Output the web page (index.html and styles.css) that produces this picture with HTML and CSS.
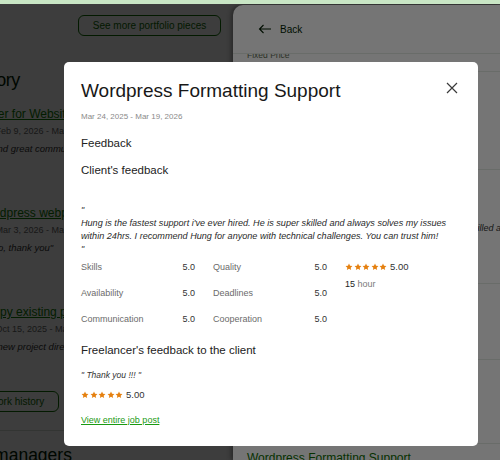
FILE: index.html
```html
<!DOCTYPE html>
<html lang="en">
<head>
    <meta charset="UTF-8">
    <meta name="viewport" content="width=device-width, initial-scale=1.0">
    <title>Work history - Wordpress Formatting Support</title>
    <link rel="stylesheet" href="styles.css">
</head>
<body>
    <svg class="defs" width="0" height="0" aria-hidden="true">
        <symbol id="star" viewBox="0 0 24 24">
            <path d="M12 1.5l3.1 6.6 7.2.9-5.3 5 1.4 7.1L12 17.6l-6.4 3.5 1.4-7.1-5.3-5 7.2-.9z"/>
        </symbol>
    </svg>

    <div class="promo-strip"></div>

    <div class="app">
        <main class="page">
            <div class="page-inner">
                <div class="portfolio-foot">
                    <button class="btn-outline">See more portfolio pieces</button>
                </div>

                <section class="history">
                    <h2 class="section-title">Work history</h2>

                    <div class="job">
                        <a href="#" class="job-title">Web Developer for Website Fixes</a>
                        <div class="job-meta">
                            <span class="stars"><svg><use href="#star"/></svg><svg><use href="#star"/></svg><svg><use href="#star"/></svg><svg><use href="#star"/></svg><svg><use href="#star"/></svg></span>
                            <span class="score">5.00</span>
                            <span class="job-date">Feb 9, 2026 - Mar 2, 2026</span>
                        </div>
                        <p class="job-quote">"Fast response and great communication"</p>
                    </div>

                    <div class="job">
                        <a href="#" class="job-title">Update a Wordpress webpage layout</a>
                        <div class="job-meta">
                            <span class="stars"><svg><use href="#star"/></svg><svg><use href="#star"/></svg><svg><use href="#star"/></svg><svg><use href="#star"/></svg><svg><use href="#star"/></svg></span>
                            <span class="score">5.00</span>
                            <span class="job-date">Mar 3, 2026 - Mar 20, 2026</span>
                        </div>
                        <p class="job-quote">"Got it all done, so, thank you"</p>
                    </div>

                    <div class="job">
                        <a href="#" class="job-title">Help me to copy existing pages</a>
                        <div class="job-meta">
                            <span class="stars"><svg><use href="#star"/></svg><svg><use href="#star"/></svg><svg><use href="#star"/></svg><svg><use href="#star"/></svg><svg><use href="#star"/></svg></span>
                            <span class="score">5.00</span>
                            <span class="job-date">Oct 15, 2025 - Mar 1, 2026</span>
                        </div>
                        <p class="job-quote">"Will hire him for new project directly"</p>
                    </div>

                    <button class="btn-outline">View more work history</button>
                </section>

                <section class="managers">
                    <h2 class="section-title">Account managers</h2>
                </section>
            </div>
        </main>

        <div class="backdrop drawer-backdrop"></div>

        <aside class="drawer">
            <div class="drawer-head">
                <button class="back-link">
                    <svg width="14" height="10" viewBox="0 0 14 10"><path d="M13 5H1.5M5.5 1L1.5 5l4 4" fill="none" stroke="currentColor" stroke-width="1.1"/></svg>
                    Back
                </button>
            </div>
            <div class="drawer-body">
                <div class="drawer-row row-price"><span class="muted">Fixed Price</span></div>
                <div class="drawer-row row-summary"></div>
                <div class="drawer-row row-feedback">
                    <p class="drawer-quote">"Hung is the fastest support i've ever hired. He is super skilled and always solves my issues"</p>
                </div>
                <div class="drawer-row row-rating"></div>
                <div class="drawer-row row-freelancer"></div>
                <a href="#" class="drawer-job">Wordpress Formatting Support</a>
            </div>
        </aside>

        <div class="backdrop modal-backdrop"></div>

        <div class="modal">
            <div class="modal-head">
                <h1 class="modal-title">Wordpress Formatting Support</h1>
                <button class="modal-close" aria-label="Close">
                    <svg width="12" height="12" viewBox="0 0 12 12"><path d="M1 1l10 10M11 1L1 11" stroke="currentColor" stroke-width="1.2"/></svg>
                </button>
            </div>
            <div class="modal-date">Mar 24, 2025 - Mar 19, 2026</div>

            <h3 class="modal-subtitle">Feedback</h3>
            <h3 class="modal-subtitle client">Client's feedback</h3>

            <div class="quote">
                <span>"</span>
                <span>Hung is the fastest support i've ever hired. He is super skilled and always solves my issues within 24hrs. I recommend Hung for anyone with technical challenges. You can trust him!</span>
                <span>"</span>
            </div>

            <div class="ratings">
                <div class="score-grid">
                    <div class="score-item"><span>Skills</span><span class="val">5.0</span></div>
                    <div class="score-item"><span>Quality</span><span class="val">5.0</span></div>
                    <div class="score-item"><span>Availability</span><span class="val">5.0</span></div>
                    <div class="score-item"><span>Deadlines</span><span class="val">5.0</span></div>
                    <div class="score-item"><span>Communication</span><span class="val">5.0</span></div>
                    <div class="score-item"><span>Cooperation</span><span class="val">5.0</span></div>
                </div>
                <div class="overall">
                    <div class="rating-line">
                        <span class="stars"><svg><use href="#star"/></svg><svg><use href="#star"/></svg><svg><use href="#star"/></svg><svg><use href="#star"/></svg><svg><use href="#star"/></svg></span>
                        <span class="score">5.00</span>
                    </div>
                    <div class="hours"><b>15</b> hour</div>
                </div>
            </div>

            <h3 class="modal-subtitle freelancer">Freelancer's feedback to the client</h3>
            <p class="thanks">" Thank you !!! "</p>
            <div class="rating-line">
                <span class="stars"><svg><use href="#star"/></svg><svg><use href="#star"/></svg><svg><use href="#star"/></svg><svg><use href="#star"/></svg><svg><use href="#star"/></svg></span>
                <span class="score">5.00</span>
            </div>

            <a href="#" class="job-link">View entire job post</a>
        </div>
    </div>
</body>
</html>
```

FILE: styles.css
```css
* { box-sizing: border-box; }

body {
    margin: 0;
    width: 500px;
    height: 460px;
    overflow: hidden;
    font-family: "Liberation Sans", Arial, sans-serif;
    color: #1f1f1f;
    background: #fff;
}
.defs { position: absolute; }
button { font-family: inherit; background: none; border: none; padding: 0; cursor: pointer; }
p { margin: 0; }

.promo-strip {
    height: 4px;
    background: #c9e6c5;
}

.app {
    position: relative;
    height: 456px;
    overflow: hidden;
}

/* page under the drawer */
.page {
    height: 100%;
    overflow: hidden;
}
.page-inner {
    width: 447px;
    margin-left: -74px;
}
.portfolio-foot {
    display: flex;
    justify-content: center;
    padding-top: 11px;
}
.btn-outline {
    height: 21px;
    padding: 0 14px;
    border: 1px solid #0e6e02;
    border-radius: 6px;
    color: #0e6e02;
    font-size: 10px;
}
.section-title {
    margin: 0;
    font-size: 18px;
    font-weight: 400;
    letter-spacing: -0.5px;
    color: #001e00;
}
.history { padding-top: 34px; }
.job { padding: 12px 0 39px; }
.job:first-of-type { padding-top: 15px; }
.job-title {
    display: block;
    font-size: 12px;
    color: #0e7a02;
    line-height: 16px;
}
.job-meta {
    display: flex;
    align-items: center;
    gap: 4px;
    margin-top: 2px;
    line-height: 14px;
    font-size: 9px;
}
.job-date { color: #676767; margin-left: 2px; }
.job-quote {
    margin-top: 5px;
    font-size: 9.5px;
    font-style: italic;
    color: #333;
}
.history .btn-outline { margin-top: -10px; }
.managers {
    margin-top: 18px;
    padding-top: 14px;
    border-top: 1px solid #d5e0d5;
}
.managers .section-title { font-size: 17.5px; letter-spacing: 0; }

/* overlays */
.backdrop {
    position: absolute;
    inset: 0;
}
.drawer-backdrop { background: rgba(0, 0, 0, 0.48); }
.modal-backdrop { background: rgba(0, 0, 0, 0.54); }

.drawer {
    position: absolute;
    top: 1px;
    right: 0;
    bottom: 0;
    width: 267px;
    background: #fff;
    border-radius: 10px 0 0 0;
    box-shadow: -2px 0 4px rgba(0, 0, 0, 0.35);
    overflow: hidden;
}
.drawer-head {
    height: 49px;
    padding-left: 25px;
    display: flex;
    align-items: center;
    border-bottom: 1px solid #e4ebe4;
}
.back-link {
    display: flex;
    align-items: center;
    gap: 8px;
    font-size: 10px;
    color: #001e00;
}
.drawer-body {
    overflow: hidden;
    padding-left: 14px;
}
.drawer-row { border-bottom: 1px solid #e4ebe4; margin-left: -14px; padding-left: 14px; }
.row-price { height: 22px; }
.row-price .muted {
    display: block;
    margin-top: -4px;
    font-size: 8.5px;
    line-height: 10px;
    color: #5e6d55;
}
.row-summary { height: 98px; }
.row-feedback { height: 114px; padding-top: 53px; }
.drawer-quote {
    white-space: nowrap;
    font-size: 9px;
    font-style: italic;
    color: #333;
}
.row-rating { height: 76px; }
.row-freelancer { height: 84px; }
.drawer-job {
    display: block;
    margin-top: 7px;
    font-size: 12px;
    color: #0e6e02;
    text-decoration: none;
}

/* modal */
.modal {
    position: absolute;
    left: 64px;
    top: 58px;
    width: 414px;
    height: 384px;
    padding: 17px 17px 0;
    background: #fff;
    border-radius: 5px;
}
.modal-head {
    display: flex;
    justify-content: space-between;
    align-items: center;
}
.modal-title {
    margin: 0;
    font-size: 19px;
    line-height: 24px;
    font-weight: 400;
    color: #181818;
}
.modal-close {
    width: 18px;
    height: 18px;
    display: flex;
    align-items: center;
    justify-content: center;
    color: #3a3a3a;
    margin-top: -7px;
}
.modal-date {
    margin-top: 8px;
    font-size: 8px;
    line-height: 12px;
    color: #8a8a8a;
}
.modal-subtitle {
    margin: 12px 0 0;
    font-size: 11.5px;
    line-height: 16px;
    font-weight: 400;
    color: #222;
}
.modal-subtitle.client { margin-top: 11px; }
.quote {
    margin-top: 26px;
    font-size: 9.1px;
    line-height: 13px;
    font-style: italic;
    color: #2a2a2a;
}
.quote span { display: block; }

.ratings {
    display: flex;
    gap: 18px;
    margin-top: 4px;
    font-size: 9px;
    line-height: 14px;
}
.score-grid {
    display: grid;
    grid-template-columns: 114px 114px;
    column-gap: 18px;
    row-gap: 12px;
}
.score-item {
    display: flex;
    justify-content: space-between;
    color: #6b6b6b;
}
.score-item .val { color: #333; }
.overall .hours {
    margin-top: 3px;
    color: #7a7a7a;
}
.overall .hours b { font-weight: 400; color: #222; }

.rating-line {
    display: flex;
    align-items: center;
    gap: 3px;
    font-size: 9.5px;
    line-height: 14px;
}
.stars { display: inline-flex; gap: 0.5px; }
.stars svg {
    width: 8px;
    height: 8px;
    fill: #e5800f;
}
.score { color: #333; }

.modal-subtitle.freelancer { margin-top: 16px; }
.thanks {
    margin-top: 11px;
    font-size: 8.5px;
    line-height: 13px;
    font-style: italic;
    color: #333;
}
.modal > .rating-line { margin-top: 6px; }
.job-link {
    display: block;
    margin-top: 12px;
    font-size: 9px;
    line-height: 13px;
    color: #1a9a12;
}
```
